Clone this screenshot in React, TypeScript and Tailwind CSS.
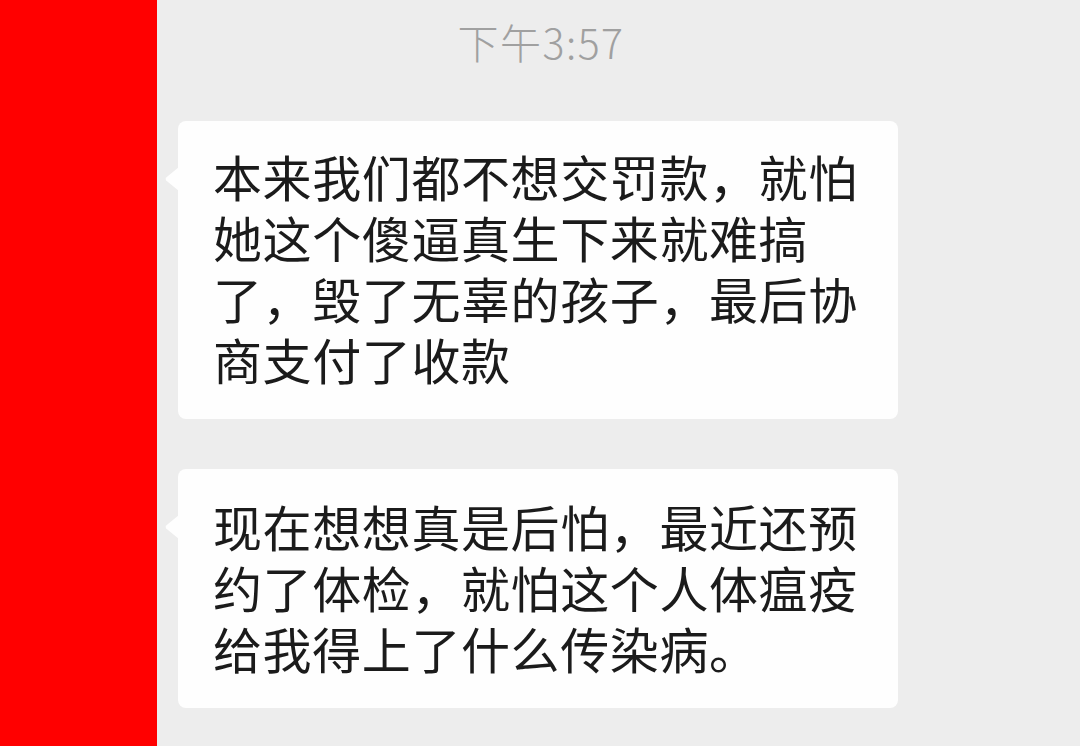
import React from "react";

const font = { fontFamily: '"Noto Sans CJK SC", "Noto Sans", sans-serif' };

function Bubble({ lines, className }: { lines: string[]; className?: string }) {
  return (
    <div className={"relative ml-[178px] w-[720px] rounded-[8px] bg-[#fefefe] pl-[35px] " + (className ?? "")}>
      <svg
        className="absolute left-[-13px] top-[46px]"
        width="14"
        height="24"
        viewBox="0 0 14 24"
      >
        <path d="M14 0 L1.2 10.6 Q0 12 1.2 13.4 L14 24 Z" fill="#fefefe" />
      </svg>
      {lines.map((l, i) => (
        <div key={i} className="whitespace-nowrap text-[49px] leading-[61px] tracking-[0.6px] text-[#1b1b1b]">
          {l}
        </div>
      ))}
    </div>
  );
}

export default function App() {
  return (
    <div className="relative h-[746px] w-[1080px] overflow-hidden bg-[#ededed]" style={font}>
      <div className="absolute left-0 top-0 h-full w-[157px] bg-[#ff0000]" />
      <div className="flex h-[88px] items-center justify-center pb-[6px] pl-[2px] text-[41px] font-light leading-none tracking-[1.5px] text-[#a0a0a0]">
        下午3:57
      </div>
      <div className="mt-[33px] flex flex-col gap-[50px]">
        <Bubble
          className="pt-[24px] pb-[30px]"
          lines={["本来我们都不想交罚款，就怕", "她这个傻逼真生下来就难搞", "了，毁了无辜的孩子，最后协", "商支付了收款"]}
        />
        <Bubble
          className="pt-[26px] pb-[30px]"
          lines={["现在想想真是后怕，最近还预", "约了体检，就怕这个人体瘟疫", "给我得上了什么传染病。"]}
        />
      </div>
    </div>
  );
}
